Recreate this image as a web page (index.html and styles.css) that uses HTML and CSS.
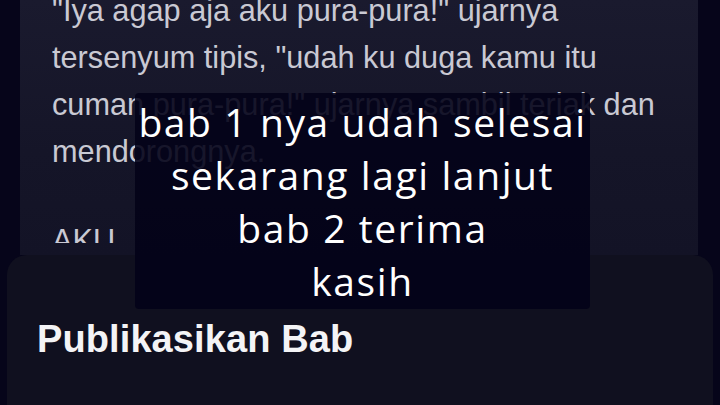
FILE: index.html
```
<!DOCTYPE html>
<html>
<head>
<meta charset="utf-8">
<link rel="stylesheet" href="styles.css">
</head>
<body>
<div class="screen">
  <div class="card">
    <div class="story">
      <p class="para">"Iya agap aja aku pura-pura!" ujarnya tersenyum tipis, "udah ku duga kamu itu cuman pura-pura!" ujarnya sambil teriak dan mendorongnya.</p>
      <p class="para">AKU</p>
    </div>
  </div>
  <div class="sheet">
    <h2 class="sheet-title">Publikasikan Bab</h2>
  </div>
  <div class="caption">
    <span>bab 1 nya udah selesai</span>
    <span>sekarang lagi lanjut</span>
    <span>bab 2 terima</span>
    <span>kasih</span>
  </div>
</div>
</body>
</html>
```
FILE: styles.css
```
* { box-sizing: border-box; }
html, body {
  margin: 0;
  padding: 0;
  background: #06051a;
}
.screen {
  position: relative;
  width: 720px;
  height: 405px;
  overflow: hidden;
  background: #06051a;
}
.card {
  margin-left: 20px;
  width: 678px;
  height: 255px;
  background: linear-gradient(180deg, #1a1a2e 0%, #151528 60%, #131326 100%);
  padding-left: 32px;
  overflow: hidden;
}
.story {
  margin-top: -13px;
  height: 256px;
  overflow: hidden;
  font-family: "Liberation Sans", Arial, sans-serif;
  font-size: 30.7px;
  line-height: 47px;
  color: #c9c9d3;
  width: 630px;
}
.para {
  margin: 0 0 42px 0;
}
.sheet {
  margin: 0 7px;
  height: 150px;
  background: #10101f;
  border-radius: 20px 20px 0 0;
  padding: 64px 0 0 30px;
}
.sheet-title {
  margin: 0;
  font-family: "Liberation Sans", Arial, sans-serif;
  font-weight: 700;
  font-size: 38px;
  line-height: 40px;
  color: #f4f4f6;
  letter-spacing: 0.1px;
}
.caption {
  position: absolute;
  left: 135px;
  top: 93px;
  width: 455px;
  height: 216px;
  background: rgba(3, 2, 24, 0.9);
  border-radius: 4px;
  display: flex;
  flex-direction: column;
  align-items: center;
  padding-top: 2px;
  font-family: "Open Sans", sans-serif;
  font-size: 39px;
  line-height: 53px;
  letter-spacing: 1.6px;
  color: #ffffff;
}
```
